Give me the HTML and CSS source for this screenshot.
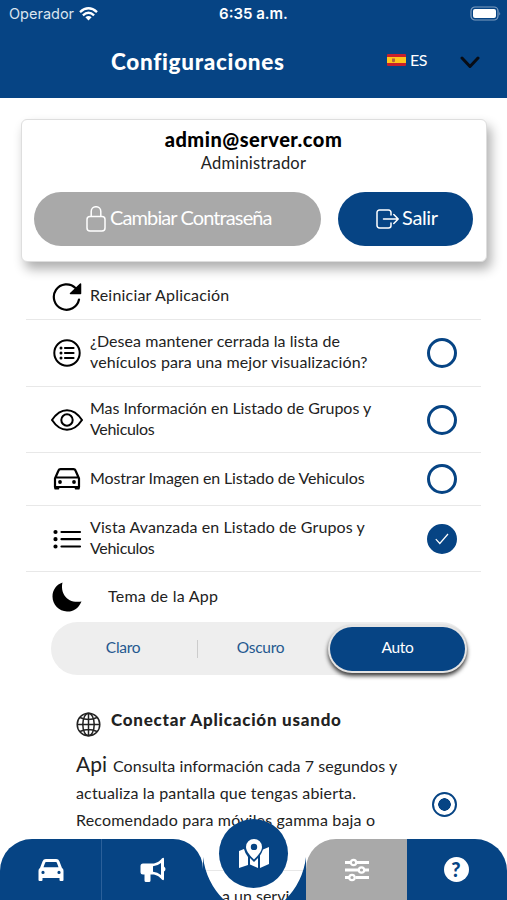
FILE: index.html
```html
<!DOCTYPE html>
<html lang="es">
<head>
    <meta charset="UTF-8">
    <meta name="viewport" content="width=device-width, initial-scale=1.0">
    <title>Configuraciones</title>
    <link rel="stylesheet" href="styles.css">
</head>
<body>
    <header class="header">
        <div class="status-bar">
            <div class="carrier">
                <span>Operador</span>
                <svg width="19" height="14" viewBox="0 0 19 14" fill="none" stroke="#fff" stroke-width="2.4">
                    <path d="M1 5.2Q9.500-2.500 18 5.200"/>
                    <path d="M3.900 8.300Q9.500 3.300 15.100 8.300"/>
                    <path d="M6.400 10.200Q9.500 7.800 12.600 10.200L9.500 13.600z" fill="#fff" stroke="none"/>
                </svg>
            </div>
            <span class="clock">6:35 a.m.</span>
            <svg class="battery" width="31" height="15" viewBox="0 0 31 15">
                <rect x="1" y="1" width="27" height="13" rx="4" fill="none" stroke="#7f9dc0" stroke-width="1.200"/>
                <rect x="3" y="3" width="23" height="9" rx="2" fill="#fff"/>
                <path d="M29.300 5.500q1.600 2 0 4z" fill="#7f9dc0"/>
            </svg>
        </div>
        <div class="title-bar">
            <h1>Configuraciones</h1>
            <div class="language">
                <svg width="19" height="12" viewBox="0 0 19 12">
                    <rect width="19" height="12" rx="1" fill="#c8202b"/>
                    <rect y="3" width="19" height="6" fill="#ffc51c"/>
                    <path d="M5 4.500h3v3q-1.500 1.500-3 0z" fill="#b5643a"/>
                </svg>
                <span>ES</span>
            </div>
            <svg class="chevron" width="20" height="13" viewBox="0 0 20 13" fill="none" stroke="#080c14" stroke-width="3" stroke-linecap="round" stroke-linejoin="round">
                <path d="M2 2l8 8.500L18 2"/>
            </svg>
        </div>
    </header>

    <main>
        <section class="card">
            <h2>admin@server.com</h2>
            <p class="role">Administrador</p>
            <div class="card-buttons">
                <button class="btn btn-password">
                    <svg width="20" height="26" viewBox="0 0 20 26" fill="none" stroke="#fff" stroke-width="1.500">
                        <rect x="1" y="10.500" width="18" height="14.500" rx="3"/>
                        <path d="M5.200 10.500V5.500a4.800 4.800 0 0 1 9.600 0v5"/>
                    </svg>
                    <span>Cambiar Contraseña</span>
                </button>
                <button class="btn btn-exit">
                    <svg width="23" height="20" viewBox="0 0 23 20" fill="none" stroke="#fff" stroke-width="1.500" stroke-linecap="round" stroke-linejoin="round">
                        <path d="M15 6V3.500a2.500 2.500 0 0 0-2.500-2.500h-9A2.500 2.500 0 0 0 1 3.500v13A2.500 2.500 0 0 0 3.500 19h9a2.500 2.500 0 0 0 2.500-2.500V14M7.500 10H22M17.800 5.500L22.200 10l-4.400 4.500"/>
                    </svg>
                    <span>Salir</span>
                </button>
            </div>
        </section>

        <ul class="options">
            <li class="option option-restart">
                <svg class="icon" viewBox="0 0 32 32" fill="none" stroke="#000" stroke-width="2.200" stroke-linecap="round">
                    <path d="M28 19.500A12.700 12.700 0 1 1 24.500 8"/>
                    <path d="M29.500 4v9.500H19.500z" fill="#000" stroke-width="1.500" stroke-linejoin="round"/>
                </svg>
                <p class="t-restart">Reiniciar Aplicación</p>
            </li>
            <li class="option">
                <svg class="icon" viewBox="0 0 32 32" fill="none" stroke="#000" stroke-width="2" stroke-linecap="round">
                    <circle cx="16" cy="16" r="12.700"/>
                    <path d="M14 11h8.500M14 16h8.500M14 21h8.500" stroke-width="2.200"/>
                    <path d="M10 11h.01M10 16h.01M10 21h.01" stroke-width="3"/>
                </svg>
                <p><span class="t-closed-1">¿Desea mantener cerrada la lista de</span><br><span class="t-closed-2">vehículos para una mejor visualización?</span></p>
                <span class="check"></span>
            </li>
            <li class="option option-info">
                <svg class="icon" viewBox="0 0 32 32" fill="none" stroke="#000" stroke-width="2" stroke-linejoin="round">
                    <path d="M1 16Q7.500 6.200 16 6.200T31 16Q24.500 25.800 16 25.800T1 16z"/>
                    <circle cx="16" cy="16" r="5.700"/>
                </svg>
                <p><span class="t-info">Mas Información en Listado de Grupos y</span><br><span class="t-vehicles">Vehiculos</span></p>
                <span class="check"></span>
            </li>
            <li class="option option-image">
                <svg class="icon" viewBox="0 0 32 32" fill="none" stroke="#000" stroke-width="2.200" stroke-linejoin="round">
                    <path d="M4 15.500L7.500 7.500Q8 6.200 9.500 6.200h13Q24 6.200 24.500 7.500L28 15.500V24H4zM4.500 14.500h23"/>
                    <path d="M4 24h3.500v1.700H4zM24.500 24H28v1.700h-3.500z" fill="#000" stroke-width="1.500"/>
                    <circle cx="9" cy="19" r="1.900" fill="#000" stroke="none"/>
                    <circle cx="23" cy="19" r="1.900" fill="#000" stroke="none"/>
                </svg>
                <p class="t-image">Mostrar Imagen en Listado de Vehiculos</p>
                <span class="check"></span>
            </li>
            <li class="option option-advanced">
                <svg class="icon" viewBox="0 0 32 32" fill="none" stroke="#000" stroke-width="2.200" stroke-linecap="round">
                    <path d="M10.500 9H29M10.500 16.200H29M10.500 23.500H29"/>
                    <path d="M4.500 9h.01M4.500 16.200h.01M4.500 23.500h.01" stroke-width="4.200"/>
                </svg>
                <p><span class="t-advanced">Vista Avanzada en Listado de Grupos y</span><br><span class="t-vehicles">Vehiculos</span></p>
                <span class="check checked">
                    <svg width="14" height="12" viewBox="0 0 14 12" fill="none" stroke="#fff" stroke-width="1.200">
                        <path d="M.8 6.200l4 4.300L13 1"/>
                    </svg>
                </span>
            </li>
        </ul>

        <section class="theme">
            <div class="theme-title">
                <svg class="icon" viewBox="0 0 32 32">
                    <path d="M11.500 1.500C9 12 16 23 30.500 20.500C27 28.500 21 31 16 30.500C8 30 1.500 24 1.500 15.500C1.500 9 5.500 3.500 11.500 1.500z"/>
                </svg>
                <p>Tema de la App</p>
            </div>
            <div class="segment">
                <button>Claro</button>
                <button>Oscuro</button>
                <button class="active">Auto</button>
            </div>
        </section>

        <section class="connection">
            <div class="connection-title">
                <svg width="25" height="25" viewBox="0 0 25 25" fill="none" stroke="#222" stroke-width="1.500">
                    <circle cx="12.500" cy="12.500" r="11.300"/>
                    <ellipse cx="12.500" cy="12.500" rx="5.700" ry="11.300"/>
                    <path d="M12.500 1v23M1 12.500h23M4 5.500q8.500 4 17 0M4 19.500q8.500-4 17 0"/>
                </svg>
                <h3>Conectar Aplicación usando</h3>
            </div>
            <div class="mode">
                <p><span class="t-api">Api</span><span class="t-mode-1">Consulta información cada 7 segundos y</span><br><span class="t-mode-2">actualiza la pantalla que tengas abierta.</span><br><span class="t-mode-3">Recomendado para móviles gamma baja o</span></p>
                <span class="radio"></span>
            </div>
            <p class="mode-next">a un servi</p>
        </section>
    </main>

    <nav class="tabs">
        <a class="tab tab-first">
            <svg width="26" height="22" viewBox="0 0 26 22">
                <path fill="#fff" fill-rule="evenodd" d="M2 9L4.600 2.300Q5.400 0 7.800 0h10.400q2.400 0 3.200 2.300L24 9q1.500.8 1.500 2.800V21q0 1-1 1h-2q-1 0-1-1v-2h-17v2q0 1-1 1h-2q-1 0-1-1v-9.200Q.5 9.800 2 9zM5.500 8.300h15L18.800 3.600q-.2-.6-1-.6H8.200q-.8 0-1 .6zM5 11.800a1.600 1.600 0 1 0 0 3.200a1.600 1.600 0 0 0 0-3.200zM21 11.800a1.600 1.600 0 1 0 0 3.200a1.600 1.600 0 0 0 0-3.200z"/>
            </svg>
        </a>
        <a class="tab tab-news">
            <svg width="26" height="25" viewBox="0 0 26 25">
                <path fill="#fff" fill-rule="evenodd" d="M3 6.500h9.500c4 0 7.500-2.500 9.300-5Q24 0 24 2v7.500q1.500 1 1.500 2.500t-1.500 2.500V22q0 2-2.200.5c-2-2.500-5.300-5-9.300-5h-2v6q0 1.500-1.500 1.500H6q-1.500 0-1.500-1.500v-6H3Q.5 17.500.5 15V9Q.5 6.500 3 6.500zM13 9.300v5.400q4.500.3 8 3.300V6q-3.500 3-8 3.300z"/>
            </svg>
        </a>
        <div class="tab-center">
            <svg class="notch" viewBox="0 0 103 61" fill="#064484">
                <path d="M0 18Q3 43 21 61H0zM103 18Q100 43 82 61h21z"/>
            </svg>
            <a class="map-button">
                <svg width="32" height="30" viewBox="0 0 32 30">
                    <path fill="#fff" d="M1 12l5-2q1 4.500 4 8v8L1 29zM12 19l4 4 4-4v10l-8-3.500zM22 16.500q2-3 3-6l6-2.500v17l-9 4z"/>
                    <path fill="#fff" fill-rule="evenodd" d="M16 0a8 8 0 0 1 8 8c0 4.500-5 9.500-8 12.500C13 17.500 8 12.500 8 8a8 8 0 0 1 8-8zM16 4.700a3.200 3.200 0 1 0 0 6.400a3.200 3.200 0 0 0 0-6.400z"/>
                </svg>
            </a>
        </div>
        <a class="tab tab-settings">
            <svg width="26" height="24" viewBox="0 0 26 24" fill="none" stroke="#fff" stroke-width="2.800">
                <path d="M1 4.500h5.500M12.500 4.500H25M1 12h13M20.500 12H25M1 19.500h4M11.500 19.500H25"/>
                <circle cx="9.500" cy="4.500" r="2.700" stroke-width="2.200"/>
                <circle cx="17.500" cy="12" r="2.700" stroke-width="2.200"/>
                <circle cx="8" cy="19.500" r="2.700" stroke-width="2.200"/>
            </svg>
        </a>
        <a class="tab tab-last"><span class="help">?</span></a>
    </nav>
</body>
</html>
```

FILE: styles.css
```css
* {
    box-sizing: border-box;
}
body {
    width: 507px;
    height: 900px;
    margin: 0;
    overflow: hidden;
    background: #fff;
    color: #222;
    font-family: Lato, sans-serif;
    font-size: 16px;
}
h1, h2, h3, p, ul {
    margin: 0;
    padding: 0;
}
p, h1, h2, h3, span {
    white-space: nowrap;
}
button {
    border: none;
    padding: 0;
    font-family: inherit;
    background: none;
}
svg {
    display: block;
    flex-shrink: 0;
}
.header {
    height: 98px;
    background: #064484;
    color: #fff;
}
.status-bar {
    height: 27px;
    padding: 0 6px 0 9px;
    display: grid;
    grid-template-columns: 1fr auto 1fr;
    align-items: center;
    font-family: Inter, sans-serif;
    font-size: 14.500px;
}
.carrier {
    display: flex;
    align-items: center;
    gap: 5px;
    color: #dbe5ef;
}
.clock {
    font-weight: 600;
    font-size: 15px;
    margin-right: 3px;
}
.battery {
    justify-self: end;
}
.title-bar {
    height: 70px;
    display: flex;
    align-items: center;
    padding-left: 111px;
}
h1 {
    width: 276px;
    margin-top: -2px;
    font-size: 22.500px;
    font-weight: 900;
    letter-spacing: 0.7px;
}
.language {
    display: flex;
    align-items: center;
    gap: 4px;
    width: 73px;
    margin-top: -5px;
    letter-spacing: -0.5px;
}
/* Tarjeta del usuario */
.card {
    width: 466px;
    height: 143px;
    margin: 21px 0 0 21px;
    padding: 7px 13px 0 12px;
    border: 1px solid #dedede;
    border-radius: 6px;
    background: #fff;
    box-shadow: 4px 7px 12px rgba(0,0,0,0.32);
    text-align: center;
}
h2 {
    color: #000;
    font-size: 20px;
    font-weight: 900;
    line-height: 24px;
    letter-spacing: 0.5px;
}
.role {
    margin-top: 2px;
    line-height: 20px;
    font-size: 16.500px;
    letter-spacing: 0.2px;
}
.card-buttons {
    display: flex;
    gap: 17px;
    margin-top: 19px;
}
.btn {
    height: 54px;
    display: flex;
    align-items: center;
    justify-content: center;
    gap: 4px;
    border-radius: 27px;
    color: #fff;
    font-size: 20px;
}
.btn span {
    margin-top: -4px;
}
.btn-password {
    width: 288px;
    padding-left: 3px;
    background: #a9a9a9;
    letter-spacing: -0.9px;
}
.btn-exit {
    width: 136px;
    padding-left: 3px;
    gap: 3px;
    background: #064484;
    letter-spacing: -0.4px;
}
/* Opciones */
.options {
    margin: 11px 26px 0;
    list-style: none;
}
.option {
    height: 67px;
    padding-left: 25px;
    display: flex;
    align-items: center;
    border-bottom: 1px solid #e8e8e8;
    line-height: 21px;
}
.option p {
    width: 310px;
    margin: -4px 0 0 7px;
}
.option-restart {
    height: 47px;
}
.option-image {
    height: 53px;
}
.option-info, .option-advanced {
    height: 66px;
}
/* Ajuste del espaciado de cada linea */
.t-restart {
    letter-spacing: 0.2px;
}
.t-closed-1 {
    letter-spacing: 0.06px;
}
.t-closed-2 {
    letter-spacing: 0.12px;
}
.t-info {
    letter-spacing: -0.04px;
}
.t-vehicles {
    letter-spacing: -0.3px;
}
.t-image {
    letter-spacing: -0.12px;
}
.t-advanced {
    letter-spacing: 0.1px;
}
.t-mode-1 {
    letter-spacing: 0.06px;
}
.t-mode-2 {
    letter-spacing: 0.17px;
}
.t-mode-3 {
    letter-spacing: 0.18px;
}
.icon {
    width: 32px;
    height: 32px;
}
.check {
    width: 30px;
    height: 30px;
    margin-left: 27px;
    border: 3px solid #064484;
    border-radius: 50%;
    display: flex;
    align-items: center;
    justify-content: center;
}
.checked {
    background: #064484;
}
.theme {
    padding: 9px 39px 0 51px;
}
.theme-title {
    display: flex;
    align-items: center;
    gap: 25px;
    letter-spacing: 0.25px;
}
.theme-title p {
    margin-top: -4px;
}
.segment {
    height: 53px;
    width: 417px;
    margin-top: 9px;
    padding: 5px 3px 4px 5px;
    display: flex;
    border-radius: 27px;
    background: #eee;
}
.segment button {
    width: 132px;
    color: #24588f;
    font-size: 15.500px;
    padding-bottom: 5px;
    letter-spacing: -0.3px;
}
.segment button:first-child {
    width: 142px;
    padding-right: 8px;
    background: linear-gradient(#ccc, #ccc) right center / 1px 18px no-repeat;
}
.segment button:nth-child(2) {
    padding-right: 7px;
}
.segment .active {
    width: 135px;
    border-radius: 23px;
    background: #064484;
    color: #fff;
    box-shadow: 0 0 0 2px #e4e4e4, 0 3px 4px 2px rgba(0,0,0,0.75);
}
.connection {
    padding: 37px 0 0 76px;
}
.connection-title {
    display: flex;
    align-items: center;
    gap: 10px;
}
h3 {
    font-size: 17px;
    font-weight: 900;
    margin-top: -10px;
    letter-spacing: 0.76px;
}
.mode {
    display: flex;
    align-items: center;
    margin-top: 15px;
    line-height: 27px;
}
.mode p {
    width: 356px;
}
.t-api {
    font-size: 21px;
    line-height: 20px;
    margin-right: 6px;
}
.radio {
    width: 25px;
    height: 25px;
    margin-top: 24px;
    border: 2px solid #064484;
    border-radius: 50%;
    background: radial-gradient(circle, #064484 6px, #fff 6.500px);
}
.mode-next {
    margin: 37px 26px 0 -50px;
    padding: 15px 0 0 196px;
    border-top: 1px solid #e8e8e8;
    line-height: 20px;
}
/* Barra inferior */
.tabs {
    position: fixed;
    left: 0;
    bottom: 0;
    width: 507px;
    height: 61px;
    display: grid;
    grid-template-columns: 102px 101px 103px 101px 100px;
}
.tab {
    display: flex;
    align-items: center;
    justify-content: center;
    background: #064484;
}
.tab-first {
    border-radius: 32px 0 0 0;
    border-right: 1px solid #2b609a;
}
.tab-news {
    border-radius: 0 30px 0 0;
}
.tab-settings {
    border-radius: 30px 0 0 0;
    background: #a9a9a9;
}
.tab-last {
    padding-right: 2px;
    border-radius: 0 32px 0 0;
}
.tab-center {
    position: relative;
}
.notch {
    width: 103px;
    height: 61px;
}
.map-button {
    position: absolute;
    left: 16px;
    top: -20px;
    width: 69px;
    height: 69px;
    border-radius: 50%;
    background: #064484;
    display: flex;
    align-items: center;
    justify-content: center;
}
.help {
    width: 25px;
    height: 25px;
    border-radius: 50%;
    background: #fff;
    color: #064484;
    font-size: 20px;
    font-weight: 900;
    line-height: 24px;
    text-align: center;
}
```
